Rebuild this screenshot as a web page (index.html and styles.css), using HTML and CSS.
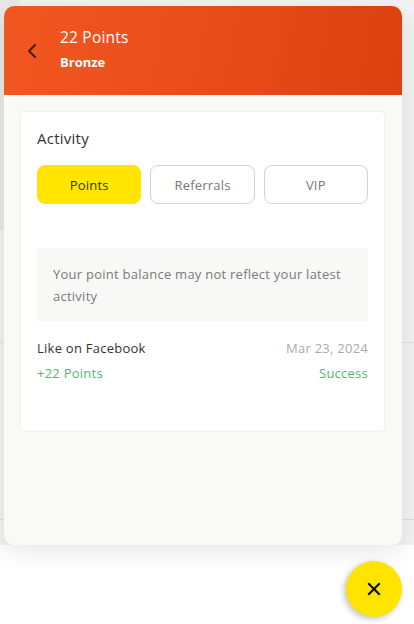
FILE: index.html
```html
<!DOCTYPE html>
<html lang="en">
<head>
  <meta charset="UTF-8" />
  <title>Rewards</title>
  <link rel="stylesheet" href="styles.css">
</head>
<body>

  <!-- page behind the widget -->
  <div class="backdrop">
    <div class="bd-side"></div>
    <div class="bd-row bd-row-1"></div>
    <div class="bd-row bd-row-2"></div>
  </div>

  <div class="panel">
    <div class="panel-head">
      <button class="back" aria-label="Back">
        <svg width="12" height="16" viewBox="0 0 12 16"><path d="M9 2 L3 8 L9 14" fill="none" stroke="#4a1a0a" stroke-width="2" stroke-linecap="round" stroke-linejoin="round"/></svg>
      </button>
      <div class="head-text">
        <div class="head-points">22 Points</div>
        <div class="head-tier">Bronze</div>
      </div>
    </div>

    <div class="panel-body">
      <div class="card">
        <h3 class="card-title">Activity</h3>
        <div class="tabs">
          <button class="tab active">Points</button>
          <button class="tab">Referrals</button>
          <button class="tab">VIP</button>
        </div>

        <div class="notice">Your point balance may not reflect your latest activity</div>

        <div class="activity">
          <div class="act-row">
            <span class="act-name">Like on Facebook</span>
            <span class="act-date">Mar 23, 2024</span>
          </div>
          <div class="act-row">
            <span class="act-points">+22 Points</span>
            <span class="act-status">Success</span>
          </div>
        </div>
      </div>
    </div>
  </div>

  <button class="fab" aria-label="Close">
    <svg width="14" height="14" viewBox="0 0 14 14"><path d="M2 2 L12 12 M12 2 L2 12" stroke="#111" stroke-width="2.2" stroke-linecap="square"/></svg>
  </button>

</body>
</html>
```

FILE: styles.css
```css
body {
  margin: 0;
  font-family: "Open Sans", "Noto Sans", Arial, sans-serif;
  background: #fff;
  height: 624px;
  overflow: hidden;
  position: relative;
}
button {
  font-family: inherit;
  cursor: pointer;
}

.backdrop {
  height: 545px;
  background: #f2f2f2;
  position: relative;
}
.bd-side {
  width: 20px;
  height: 230px;
  background: #e9e9e9;
}
.bd-row {
  height: 1px;
  background: #dedede;
}
.bd-row-1 {
  margin-top: 112px;
}
.bd-row-2 {
  margin-top: 176px;
}

.panel {
  position: absolute;
  left: 4px;
  top: 6px;
  width: 398px;
  height: 539px;
  background: #f9f9f8;
  border-radius: 10px;
  overflow: hidden;
  box-shadow: 0 6px 24px rgba(0, 0, 0, 0.10);
}
.panel-head {
  height: 89px;
  background: linear-gradient(100deg, #f35721 0%, #e84c19 50%, #db4210 100%);
  display: flex;
  align-items: center;
  padding-left: 20px;
  box-sizing: border-box;
}
.back {
  background: none;
  border: none;
  padding: 0;
  width: 16px;
  height: 18px;
  display: flex;
  align-items: center;
  justify-content: center;
  margin-right: 20px;
}
.head-text {
  color: #fff;
  margin-top: -4px;
}
.head-points {
  font-size: 15.5px;
  font-weight: 500;
  line-height: 20px;
  letter-spacing: 0.2px;
}
.head-tier {
  font-size: 13px;
  font-weight: 700;
  line-height: 18px;
  margin-top: 6px;
}

.panel-body {
  padding: 16px 17px 0 16px;
}
.card {
  background: #fff;
  border: 1px solid #f0f0ee;
  border-radius: 4px;
  padding: 16px 16px 49px 16px;
  letter-spacing: 0.25px;
}
.card-title {
  margin: 0;
  font-size: 15px;
  font-weight: 400;
  color: #333;
  line-height: 20px;
}
.tabs {
  display: grid;
  grid-template-columns: 1fr 1fr 1fr;
  gap: 9px;
  margin-top: 17px;
}
.tab {
  height: 39px;
  border: 1px solid #d2d2d2;
  border-radius: 8px;
  background: #fff;
  color: #777;
  font-size: 13px;
  letter-spacing: 0.2px;
}
.tab.active {
  background: #ffe500;
  border-color: #ffe500;
  color: #333;
}

.notice {
  margin-top: 44px;
  background: #f8f8f6;
  padding: 15px 16px 14px 16px;
  font-size: 13px;
  line-height: 22px;
  color: #7a7a7a;
}

.activity {
  margin-top: 18px;
}
.act-row {
  display: flex;
  justify-content: space-between;
  font-size: 13px;
  line-height: 18px;
}
.act-row + .act-row {
  margin-top: 7px;
}
.act-name {
  color: #333;
}
.act-date {
  color: #aaa;
}
.act-points, .act-status {
  color: #4cb874;
}

.fab {
  position: absolute;
  left: 346px;
  top: 561px;
  width: 56px;
  height: 56px;
  border-radius: 50%;
  border: none;
  background: #ffe400;
  box-shadow: -2px 2px 6px rgba(0, 0, 0, 0.25);
  display: flex;
  align-items: center;
  justify-content: center;
  padding: 0;
}
```
